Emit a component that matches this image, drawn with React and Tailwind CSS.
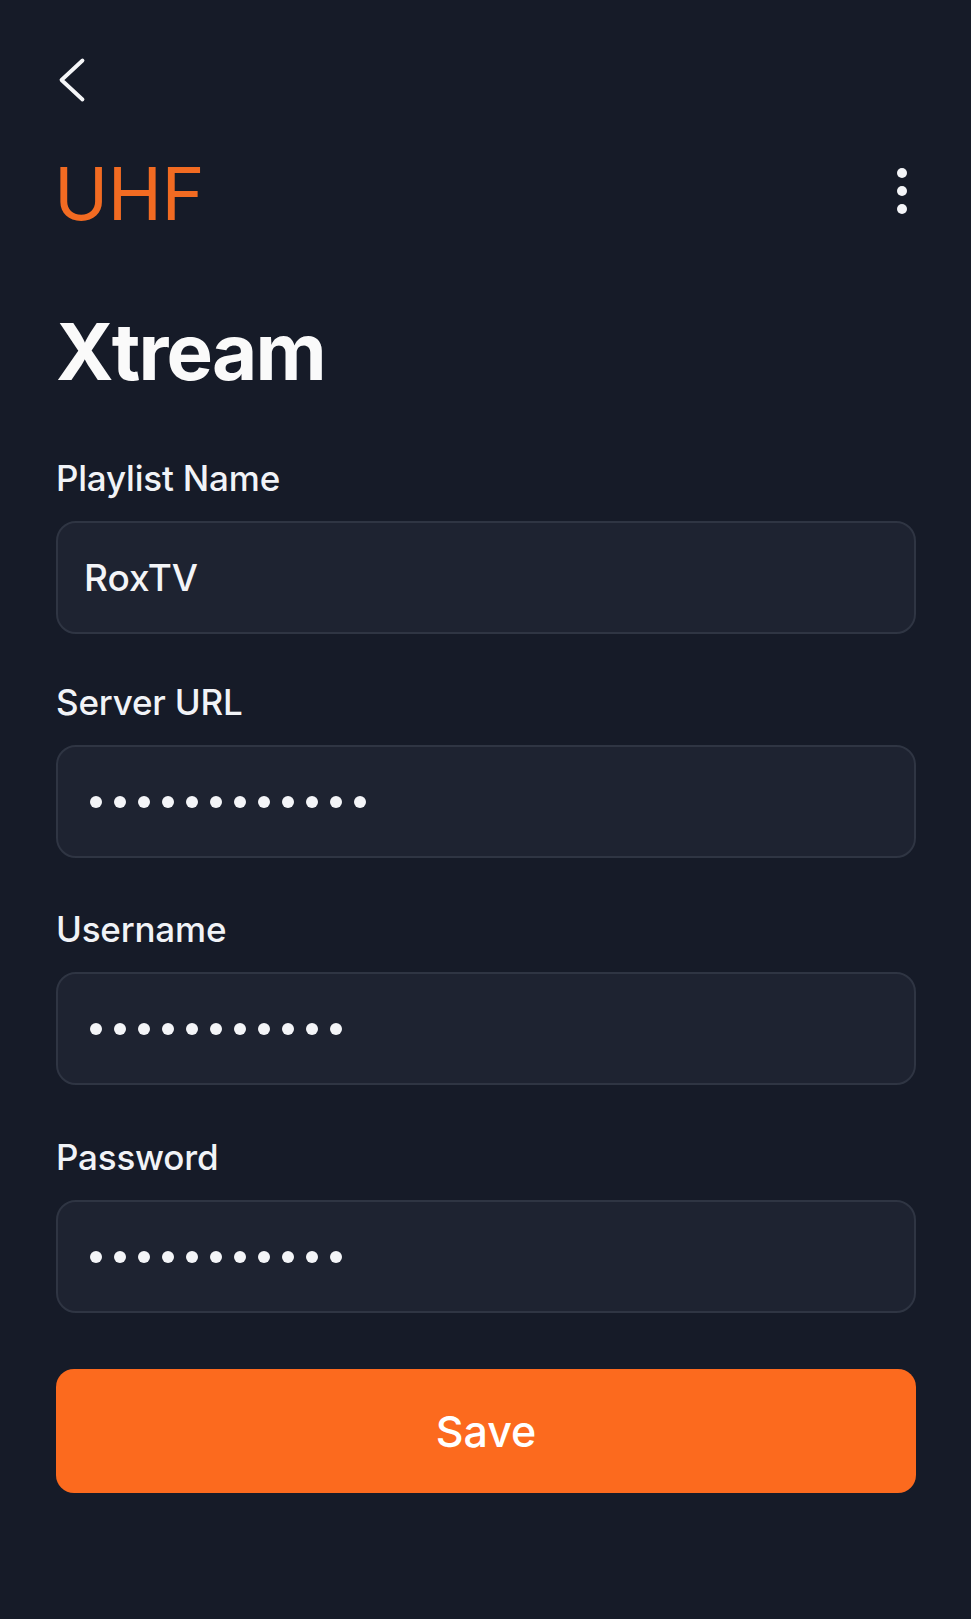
import React from "react";

const font = { fontFamily: "Inter, 'Noto Sans', sans-serif" };

function Dots({ count }) {
  return (
    <div className="flex items-center gap-[12px] pl-[32px]">
      {Array.from({ length: count }).map((_, i) => (
        <span key={i} className="block w-[12px] h-[12px] rounded-full bg-[#f4f5f8]" />
      ))}
    </div>
  );
}

function Field({ label, children, className = "" }) {
  return (
    <div className={className}>
      <div className="text-[35px] leading-[34px] font-medium text-[#f1f3f7] tracking-[-0.2px]">{label}</div>
      <div className="mt-[26px] h-[113px] rounded-[20px] border-2 border-[#2f3543] bg-[#1e2331] flex items-center">
        {children}
      </div>
    </div>
  );
}

export default function App() {
  return (
    <div className="min-h-[1619px] w-full bg-[#161b28] pl-[56px] pr-[55px] pt-[56px] pb-[100px]" style={font}>
      <svg width="32" height="48" viewBox="0 0 32 48" className="block" fill="none">
        <path d="M26.5 4.5 L5.5 24 L26.5 43.5" stroke="#f5f6f8" strokeWidth="3.8" strokeLinecap="round" strokeLinejoin="round" />
      </svg>

      <div className="mt-[53px] flex items-start justify-between">
        <div className="-ml-[2px] text-[73px] leading-[73px] font-normal text-[#f26b22] tracking-[-0.5px]">UHF</div>
        <div className="mt-[11px] mr-[9px] flex flex-col gap-[8px]">
          <span className="block w-[10px] h-[10px] rounded-full bg-[#f4f5f8]" />
          <span className="block w-[10px] h-[10px] rounded-full bg-[#f4f5f8]" />
          <span className="block w-[10px] h-[10px] rounded-full bg-[#f4f5f8]" />
        </div>
      </div>

      <h1 className="mt-[83px] text-[78px] leading-[78px] font-bold text-[#fafafa] tracking-[-1.8px]">Xtream</h1>

      <Field label="Playlist Name" className="mt-[70px]">
        <span className="pl-[26px] text-[37px] leading-none font-medium text-[#f3f4f7]">RoxTV</span>
      </Field>

      <Field label="Server URL" className="mt-[51px]">
        <Dots count={12} />
      </Field>

      <Field label="Username" className="mt-[54px]">
        <Dots count={11} />
      </Field>

      <Field label="Password" className="mt-[55px]">
        <Dots count={11} />
      </Field>

      <button className="mt-[56px] w-full h-[124px] rounded-[18px] bg-[#fc6a1e] flex items-center justify-center text-[43px] leading-none font-medium text-white">
        Save
      </button>
    </div>
  );
}
